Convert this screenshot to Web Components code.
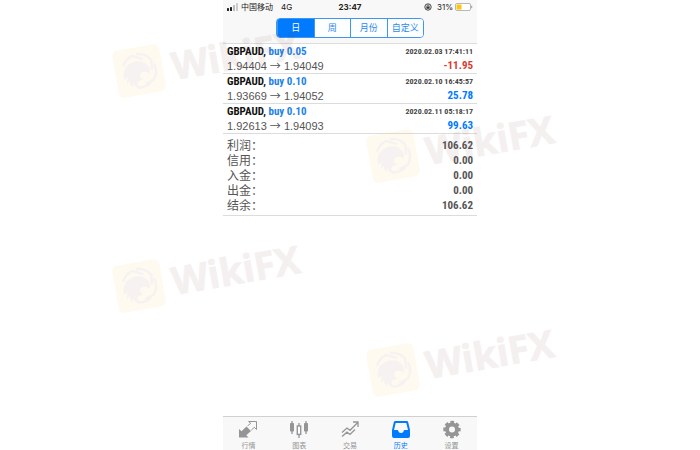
<!DOCTYPE html>
<html lang="zh-CN">
<head>
<meta charset="utf-8">
<meta name="viewport" content="width=device-width, initial-scale=1">
<title>历史</title>
<style>
  html, body {
    height: 100%;
    margin: 0;
  }

  body {
    --blue: #007aff;
    --buy: #1c82e8;
    --red: #d93a30;
    --bar: #f8f8f8;
    --line: #dcdcdc;
    --narrow: "Liberation Sans Narrow", "Roboto Condensed", "Open Sans Condensed", Roboto, "Noto Sans CJK SC", sans-serif;
    background: #fff;
    color: #555;
    font-family: "Liberation Sans", "Noto Sans CJK SC", sans-serif;
  }
</style>
</head>
<body>
<history-app></history-app>

<script>
class StatusBar extends HTMLElement {
  constructor() {
    super();
    this.attachShadow({ mode: "open" });
  }

  connectedCallback() {
    this.shadowRoot.innerHTML = `
      <style>
        :host {
          display: grid;
          grid-template-columns: 1fr auto 1fr;
          align-items: center;
          height: 14px;
          padding: 0 4px;
          font: 8px/14px Inter, "Noto Sans CJK SC", sans-serif;
          color: #222;
        }

        .side {
          display: flex;
          align-items: center;
          gap: 2px;
        }

        .right {
          justify-content: flex-end;
        }

        .net {
          margin-left: 6px;
        }

        .time {
          font-weight: 700;
        }

        .lock {
          margin-right: 3px;
        }
      </style>
      <div class="side">
        <svg width="12" height="8" viewBox="0 0 12 8">
          <rect y="5" width="2" height="3" rx=".5" fill="#222"/>
          <rect x="3" y="4" width="2" height="4" rx=".5" fill="#222"/>
          <rect x="6" y="2" width="2" height="6" rx=".5" fill="#bbb"/>
          <rect x="9" y="0" width="2" height="8" rx=".5" fill="#ccc"/>
        </svg>
        <slot name="carrier"></slot>
        <span class="net"><slot name="network"></slot></span>
      </div>
      <span class="time"><slot name="time"></slot></span>
      <div class="side right">
        <svg class="lock" width="8" height="8" viewBox="0 0 8 8" fill="none" stroke="#333">
          <circle cx="4" cy="4" r="3.2" stroke-width=".9"/>
          <path d="M3 4V3a1 1 0 0 1 2 0v1" stroke-width=".7"/>
          <rect x="2.4" y="3.6" width="3.2" height="2.2" fill="#333" stroke="none"/>
        </svg>
        <slot name="battery"></slot>
        <svg width="18" height="8" viewBox="0 0 18 8">
          <rect x=".5" y=".5" width="15" height="7" rx="1.5" fill="#fff" stroke="#999" stroke-width=".7"/>
          <rect x="1.5" y="1.5" width="5" height="5" rx=".5" fill="#fcc60a"/>
          <path d="M16.7 2.8v2.4" stroke="#999"/>
        </svg>
      </div>
    `;
  }
}

class PeriodSwitch extends HTMLElement {
  constructor() {
    super();
    this.attachShadow({ mode: "open" });
  }

  connectedCallback() {
    const items = this.getAttribute("items").split(",");
    const buttons = items
      .map((item, i) => `<button type="button" aria-pressed="${i === 0}">${item}</button>`)
      .join("");

    this.shadowRoot.innerHTML = `
      <style>
        :host {
          display: grid;
          grid-template-columns: repeat(4, 1fr);
          box-sizing: border-box;
          width: 148px;
          height: 20px;
          border: 1px solid #3d97ee;
          border-radius: 4px;
          overflow: hidden;
        }

        button {
          margin: 0;
          padding: 0;
          border: 0;
          border-left: 1px solid #3d97ee;
          background: #fdfeff;
          color: #2b8aea;
          font: 9px/18px "Noto Sans CJK SC", sans-serif;
        }

        button:first-child {
          border-left: 0;
        }

        button[aria-pressed="true"] {
          background: var(--blue);
          color: #fff;
        }
      </style>
      ${buttons}
    `;

    this.shadowRoot.querySelectorAll("button").forEach((button, i, all) => {
      button.addEventListener("click", () => {
        all.forEach((b) => b.setAttribute("aria-pressed", String(b === button)));
      });
    });
  }
}

class TradeItem extends HTMLElement {
  constructor() {
    super();
    this.attachShadow({ mode: "open" });
  }

  connectedCallback() {
    const profit = this.getAttribute("profit");
    const color = Number(profit) < 0 ? "var(--red)" : "var(--blue)";

    this.shadowRoot.innerHTML = `
      <style>
        :host {
          display: block;
          padding: 1px 4px 0;
          border-bottom: 1px solid var(--line);
        }

        .row {
          display: flex;
          justify-content: space-between;
          line-height: 14px;
          white-space: nowrap;
        }

        .deal {
          font: bold 11px/14px var(--narrow);
          color: #111;
        }

        .deal span {
          color: var(--buy);
        }

        .date {
          font: bold 8px/14px var(--narrow);
          color: #444;
        }

        .price {
          font-size: 11px;
        }

        .arrow {
          font-family: "Noto Sans CJK SC", sans-serif;
          line-height: 1;
        }

        .profit {
          font: bold 11px/14px var(--narrow);
          color: ${color};
        }
      </style>
      <div class="row">
        <span class="deal">${this.getAttribute("symbol")}, <span>${this.getAttribute("deal")}</span></span>
        <span class="date">${this.getAttribute("date")}</span>
      </div>
      <div class="row">
        <span class="price">${this.getAttribute("open")} <span class="arrow">→</span> ${this.getAttribute("close")}</span>
        <span class="profit">${profit}</span>
      </div>
    `;
  }
}

class SummaryRow extends HTMLElement {
  constructor() {
    super();
    this.attachShadow({ mode: "open" });
  }

  connectedCallback() {
    this.shadowRoot.innerHTML = `
      <style>
        :host {
          display: flex;
          justify-content: space-between;
          height: 15px;
          font: 12px/17px "Liberation Sans", "Noto Sans CJK SC", sans-serif;
        }

        .value {
          font: bold 11px/15px var(--narrow);
        }
      </style>
      <span>${this.getAttribute("label")}：</span>
      <span class="value"><slot></slot></span>
    `;
  }
}

const TAB_ICONS = {
  quotes: `
    <path d="M1 17.500V9l2.500 2.300L8.500 6.500l4.500 4.500-4.700 4.300 2.200 2.200z" fill="currentColor"/>
    <path d="M9.600 5.800 12.700 3.300 10.600 1.500h7.900v8l-2.200-2.200-3 2.900" fill="none" stroke="currentColor"/>`,
  charts: `
    <path d="M3 1v13M17 1v13M10 3v3M10 14v4" stroke="currentColor" stroke-width="1.300"/>
    <rect x="1" y="3" width="4" height="8.500" rx=".8" fill="currentColor"/>
    <rect x="15" y="3" width="4" height="8.500" rx=".8" fill="currentColor"/>
    <rect x="8.300" y="6" width="3.400" height="8.400" fill="#fff" stroke="currentColor" stroke-width="1.400"/>`,
  trade: `
    <path d="M2 12.500l5-4.500 3 2.300 7.500-7.500M2 16.500l5-4.300 3 2.300 5-5M13 2h5v5" fill="none" stroke="currentColor" stroke-width="1.300"/>`,
  history: `
    <path fill-rule="evenodd" d="M4.300 1h11.400a1.600 1.600 0 0 1 1.500 1.200L19 10v6a2 2 0 0 1-2 2H3a2 2 0 0 1-2-2v-6l1.800-7.800A1.600 1.600 0 0 1 4.300 1zM4.700 3 3 10h3.400c.5 0 .8.300.9.800.3 1.500 1.200 2.200 2.700 2.200s2.400-.7 2.700-2.200c.1-.5.4-.8.900-.8H17l-1.700-7z" fill="currentColor"/>`,
  settings: `
    <circle cx="10" cy="9.500" r="5" fill="none" stroke="currentColor" stroke-width="4"/>
    <circle cx="10" cy="9.500" r="7.300" fill="none" stroke="currentColor" stroke-width="2.800" stroke-dasharray="3.600 2.130" stroke-dashoffset="1.800"/>`
};

class TabLink extends HTMLElement {
  constructor() {
    super();
    this.attachShadow({ mode: "open" });
  }

  connectedCallback() {
    this.shadowRoot.innerHTML = `
      <style>
        :host {
          display: block;
          color: #959595;
        }

        :host([active]) {
          color: var(--blue);
        }

        a {
          display: flex;
          flex-direction: column;
          align-items: center;
          gap: 1px;
          color: inherit;
          text-decoration: none;
          font: 7px/10px "Noto Sans CJK SC", sans-serif;
        }
      </style>
      <a href="#${this.getAttribute("icon")}">
        <svg width="20" height="19" viewBox="0 0 20 19">${TAB_ICONS[this.getAttribute("icon")]}</svg>
        <span><slot></slot></span>
      </a>
    `;
  }
}

class WikiMark extends HTMLElement {
  constructor() {
    super();
    this.attachShadow({ mode: "open" });
  }

  connectedCallback() {
    this.shadowRoot.innerHTML = `
      <style>
        :host {
          display: flex;
          align-items: center;
          gap: 9px;
          font: bold 38px/48px "Open Sans", sans-serif;
          color: #7a3c3c;
          -webkit-text-stroke: 1px #7a3c3c;
          opacity: .07;
          transform: rotate(-10deg);
          pointer-events: none;
          white-space: nowrap;
        }
      </style>
      <svg width="48" height="48" viewBox="0 0 48 48">
        <rect width="48" height="48" rx="6" fill="#ffc233"/>
        <g fill="none" stroke="#8a5a50" stroke-width="2.500">
          <path d="M9 17A17 17 0 0 1 20 8l10 5M24 7a17 17 0 0 1 14 8l-1 10M40 19a17 17 0 0 1-3 16l-9 3M34 37a17 17 0 0 1-14 3"/>
        </g>
        <path fill="#8a5a50" d="M8 30c-1-9 4-15 13-16 7 0 13 3 14 10l-1 5c-2-3-5-4-8-3-3 2-2 5 1 7-4 0-6 1-7 3l2 5c-4-1-5-3-6-6l-1 4c-2-2-2-4-2-7l-3 3c0-3 1-5 2-7z"/>
      </svg>
      <slot></slot>
    `;
  }
}

class HistoryApp extends HTMLElement {
  constructor() {
    super();
    this.attachShadow({ mode: "open" });
  }

  connectedCallback() {
    this.shadowRoot.innerHTML = `
      <style>
        :host {
          display: block;
          position: relative;
          min-height: 100%;
          overflow: hidden;
        }

        .screen {
          display: flex;
          flex-direction: column;
          width: 100%;
          max-width: 254px;
          min-height: 100vh;
          margin: 0 auto;
        }

        header {
          display: flex;
          flex-direction: column;
          gap: 4px;
          padding-bottom: 5px;
          background: var(--bar);
          border-bottom: 1px solid var(--line);
        }

        period-switch {
          align-self: center;
        }

        main {
          flex: 1;
        }

        .summary {
          padding: 4px 4px 2px;
          border-bottom: 1px solid var(--line);
        }

        nav {
          display: grid;
          grid-template-columns: repeat(5, 1fr);
          padding: 3px 0 0;
          background: var(--bar);
          border-top: 1px solid #d0d0d0;
        }

        wiki-mark {
          position: absolute;
        }

        .m1 { left: 114px; top: 35px; }
        .m2 { left: 368px; top: 120px; }
        .m3 { left: 114px; top: 250px; }
        .m4 { left: 368px; top: 334px; }
      </style>
      <div class="screen">
        <header>
          <status-bar>
            <span slot="carrier">中国移动</span>
            <span slot="network">4G</span>
            <span slot="time">23:47</span>
            <span slot="battery">31%</span>
          </status-bar>
          <period-switch items="日,周,月份,自定义"></period-switch>
        </header>
        <main>
          <trade-item symbol="GBPAUD" deal="buy 0.05" date="2020.02.03 17:41:11" open="1.94404" close="1.94049" profit="-11.95"></trade-item>
          <trade-item symbol="GBPAUD" deal="buy 0.10" date="2020.02.10 16:45:57" open="1.93669" close="1.94052" profit="25.78"></trade-item>
          <trade-item symbol="GBPAUD" deal="buy 0.10" date="2020.02.11 05:18:17" open="1.92613" close="1.94093" profit="99.63"></trade-item>
          <div class="summary">
            <summary-row label="利润">106.62</summary-row>
            <summary-row label="信用">0.00</summary-row>
            <summary-row label="入金">0.00</summary-row>
            <summary-row label="出金">0.00</summary-row>
            <summary-row label="结余">106.62</summary-row>
          </div>
        </main>
        <nav>
          <tab-link icon="quotes">行情</tab-link>
          <tab-link icon="charts">图表</tab-link>
          <tab-link icon="trade">交易</tab-link>
          <tab-link icon="history" active>历史</tab-link>
          <tab-link icon="settings">设置</tab-link>
        </nav>
      </div>
      <wiki-mark class="m1">WikiFX</wiki-mark>
      <wiki-mark class="m2">WikiFX</wiki-mark>
      <wiki-mark class="m3">WikiFX</wiki-mark>
      <wiki-mark class="m4">WikiFX</wiki-mark>
    `;
  }
}

customElements.define("status-bar", StatusBar);
customElements.define("period-switch", PeriodSwitch);
customElements.define("trade-item", TradeItem);
customElements.define("summary-row", SummaryRow);
customElements.define("tab-link", TabLink);
customElements.define("wiki-mark", WikiMark);
customElements.define("history-app", HistoryApp);
</script>
</body>
</html>
